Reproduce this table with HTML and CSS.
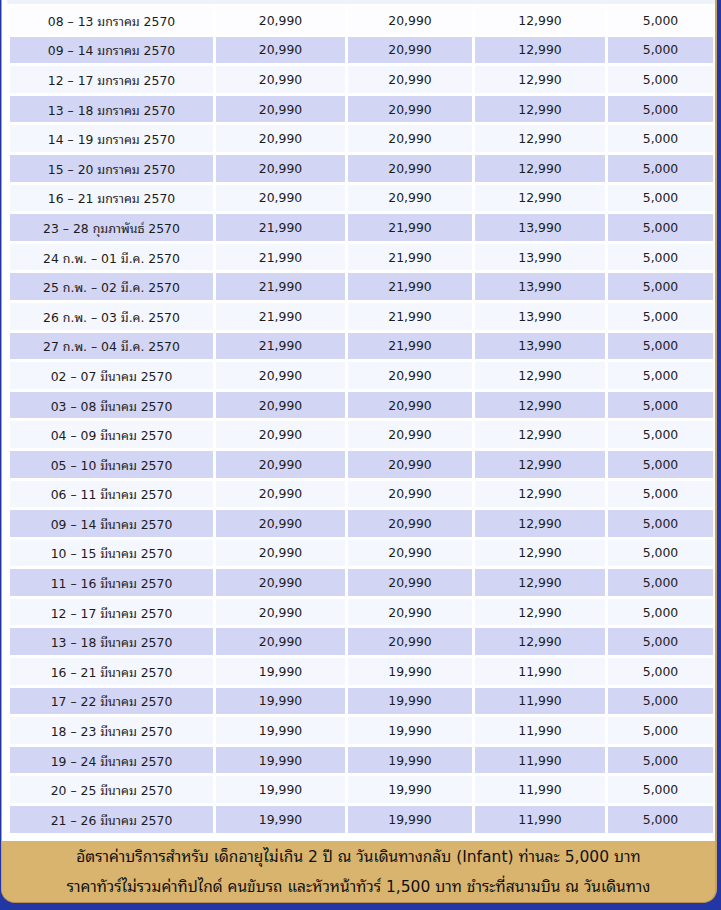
FILE: index.html
```html
<!DOCTYPE html>
<html lang="th">
<head>
<meta charset="utf-8">
<title>ตารางราคา</title>
<link rel="stylesheet" href="styles.css">
</head>
<body>
<div class="frame">
  <div class="panel">
    <div class="top-band"></div>
    <table class="prices">
      <colgroup>
        <col class="c1"><col class="c2"><col class="c3"><col class="c4"><col class="c5">
      </colgroup>
      <tbody>
        <tr class="first"><td>08 – 13 มกราคม 2570</td><td>20,990</td><td>20,990</td><td>12,990</td><td>5,000</td></tr>
        <tr><td>09 – 14 มกราคม 2570</td><td>20,990</td><td>20,990</td><td>12,990</td><td>5,000</td></tr>
        <tr><td>12 – 17 มกราคม 2570</td><td>20,990</td><td>20,990</td><td>12,990</td><td>5,000</td></tr>
        <tr><td>13 – 18 มกราคม 2570</td><td>20,990</td><td>20,990</td><td>12,990</td><td>5,000</td></tr>
        <tr><td>14 – 19 มกราคม 2570</td><td>20,990</td><td>20,990</td><td>12,990</td><td>5,000</td></tr>
        <tr><td>15 – 20 มกราคม 2570</td><td>20,990</td><td>20,990</td><td>12,990</td><td>5,000</td></tr>
        <tr><td>16 – 21 มกราคม 2570</td><td>20,990</td><td>20,990</td><td>12,990</td><td>5,000</td></tr>
        <tr><td>23 – 28 กุมภาพันธ์ 2570</td><td>21,990</td><td>21,990</td><td>13,990</td><td>5,000</td></tr>
        <tr><td>24 ก.พ. – 01 มี.ค. 2570</td><td>21,990</td><td>21,990</td><td>13,990</td><td>5,000</td></tr>
        <tr><td>25 ก.พ. – 02 มี.ค. 2570</td><td>21,990</td><td>21,990</td><td>13,990</td><td>5,000</td></tr>
        <tr><td>26 ก.พ. – 03 มี.ค. 2570</td><td>21,990</td><td>21,990</td><td>13,990</td><td>5,000</td></tr>
        <tr><td>27 ก.พ. – 04 มี.ค. 2570</td><td>21,990</td><td>21,990</td><td>13,990</td><td>5,000</td></tr>
        <tr><td>02 – 07 มีนาคม 2570</td><td>20,990</td><td>20,990</td><td>12,990</td><td>5,000</td></tr>
        <tr><td>03 – 08 มีนาคม 2570</td><td>20,990</td><td>20,990</td><td>12,990</td><td>5,000</td></tr>
        <tr><td>04 – 09 มีนาคม 2570</td><td>20,990</td><td>20,990</td><td>12,990</td><td>5,000</td></tr>
        <tr><td>05 – 10 มีนาคม 2570</td><td>20,990</td><td>20,990</td><td>12,990</td><td>5,000</td></tr>
        <tr><td>06 – 11 มีนาคม 2570</td><td>20,990</td><td>20,990</td><td>12,990</td><td>5,000</td></tr>
        <tr><td>09 – 14 มีนาคม 2570</td><td>20,990</td><td>20,990</td><td>12,990</td><td>5,000</td></tr>
        <tr><td>10 – 15 มีนาคม 2570</td><td>20,990</td><td>20,990</td><td>12,990</td><td>5,000</td></tr>
        <tr><td>11 – 16 มีนาคม 2570</td><td>20,990</td><td>20,990</td><td>12,990</td><td>5,000</td></tr>
        <tr><td>12 – 17 มีนาคม 2570</td><td>20,990</td><td>20,990</td><td>12,990</td><td>5,000</td></tr>
        <tr><td>13 – 18 มีนาคม 2570</td><td>20,990</td><td>20,990</td><td>12,990</td><td>5,000</td></tr>
        <tr><td>16 – 21 มีนาคม 2570</td><td>19,990</td><td>19,990</td><td>11,990</td><td>5,000</td></tr>
        <tr><td>17 – 22 มีนาคม 2570</td><td>19,990</td><td>19,990</td><td>11,990</td><td>5,000</td></tr>
        <tr><td>18 – 23 มีนาคม 2570</td><td>19,990</td><td>19,990</td><td>11,990</td><td>5,000</td></tr>
        <tr><td>19 – 24 มีนาคม 2570</td><td>19,990</td><td>19,990</td><td>11,990</td><td>5,000</td></tr>
        <tr><td>20 – 25 มีนาคม 2570</td><td>19,990</td><td>19,990</td><td>11,990</td><td>5,000</td></tr>
        <tr><td>21 – 26 มีนาคม 2570</td><td>19,990</td><td>19,990</td><td>11,990</td><td>5,000</td></tr>
      </tbody>
    </table>
  </div>
  <div class="footer">
    <p class="note">อัตราค่าบริการสำหรับ เด็กอายุไม่เกิน 2 ปี ณ วันเดินทางกลับ (Infant) ท่านละ 5,000 บาท</p>
    <p class="note">ราคาทัวร์ไม่รวมค่าทิปไกด์ คนขับรถ และหัวหน้าทัวร์ 1,500 บาท ชำระที่สนามบิน ณ วันเดินทาง</p>
  </div>
</div>
</body>
</html>
```
FILE: styles.css
```css
html, body {
  margin: 0;
  padding: 0;
}
body {
  background: #2236a6;
  font-family: "DejaVu Sans", "Noto Sans Thai Looped", "Noto Sans Thai", "Noto Sans", sans-serif;
  color: #1c1c1c;
  height: 910px;
  overflow: hidden;
}
.frame {
  margin: 0 4px 0 1px;
  border-left: 1px solid #c9a15e;
  border-right: 2px solid #c9a15e;
  border-bottom: 1px solid #b58d4f;
  border-radius: 0 0 14px 14px;
  overflow: hidden;
  background: #d9b46f;
}
.panel {
  background: #ffffff;
  padding: 0 0 5px 5px;
}
.top-band {
  height: 4px;
  background: #eef2fb;
}
.prices {
  border-collapse: separate;
  border-spacing: 3px;
  table-layout: fixed;
  width: 709px;
  font-size: 12.4px;
}
.c1 { width: 203px; }
.c2 { width: 129px; }
.c3 { width: 124px; }
.c4 { width: 130px; }
.c5 { width: 105px; }
.prices td {
  height: 26.6px;
  padding: 0;
  text-align: center;
  vertical-align: middle;
  background: #f5f7fe;
  white-space: nowrap;
}
.prices tr:nth-child(even) td {
  background: #d3d5f5;
}
.prices tr.first td {
  background: #fdfdff;
}
.footer {
  background: #d9b46f;
  padding: 1px 0 0;
  height: 60px;
}
.note {
  margin: 0;
  line-height: 30px;
  text-align: center;
  font-size: 15.5px;
  color: #111111;
  white-space: nowrap;
}
```
